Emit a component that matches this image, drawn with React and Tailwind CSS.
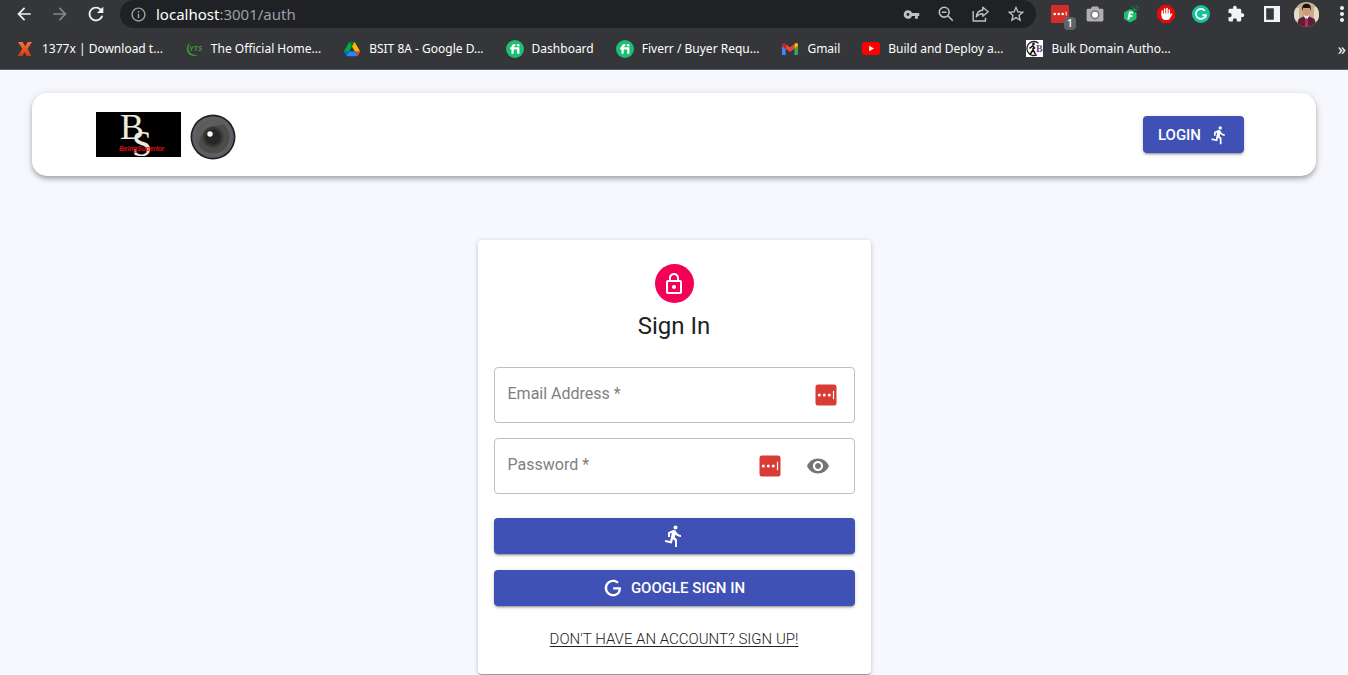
import React from 'react';
import {
  MdArrowBack, MdArrowForward, MdRefresh, MdInfoOutline, MdVpnKey, MdStarOutline,
  MdExtension, MdMoreVert, MdDirectionsRun, MdLockOutline, MdVisibility,
} from 'react-icons/md';

const chromeFont = "font-['Noto_Sans','Open_Sans',sans-serif]";

function XMark() {
  return (
    <svg viewBox="0 0 16 16" className="size-4">
      <defs>
        <linearGradient id="xg" x1="0" y1="0" x2="0" y2="1">
          <stop offset="0" stopColor="#f4743b" />
          <stop offset="1" stopColor="#d93a0c" />
        </linearGradient>
      </defs>
      <path d="M1 1h4.6l2.6 4.2L10.800 1H15l-4.300 6.800L14.200 15H9.600L7.700 10.900 5.200 15H.8l4.500-7.200z" fill="url(#xg)" />
    </svg>
  );
}

function YtsMark() {
  return (
    <svg viewBox="0 0 16 16" className="size-4">
      <path d="M5 1.500C1 3 0 7.500 1.500 11c1.800 4 7.500 5 11 2.800C8.500 14.500 4.500 13.500 3 10 1.800 7 2.500 3.600 5 1.500z" fill="#3f9a35" />
      <text x="3" y="10" fontSize="7" fontStyle="italic" fontWeight="700" fontFamily="Liberation Sans, sans-serif" fill="#3f9a35">YTS</text>
    </svg>
  );
}

function DriveMark() {
  return (
    <svg viewBox="0 0 87.300 78" className="size-4">
      <path d="M6.600 66.850l3.850 6.650c.8 1.400 1.950 2.500 3.300 3.300L27.500 53H0c0 1.550.4 3.100 1.200 4.500z" fill="#0066da" />
      <path d="M43.650 25L29.900 1.200c-1.350.8-2.500 1.900-3.300 3.300L1.200 48.500C.4 49.900 0 51.450 0 53h27.500z" fill="#00ac47" />
      <path d="M73.550 76.800c1.350-.8 2.500-1.900 3.300-3.300l1.600-2.750 7.650-13.250c.8-1.400 1.200-2.950 1.200-4.500H59.800l5.850 11.500z" fill="#ea4335" />
      <path d="M43.650 25L57.400 1.200C56.050.4 54.500 0 52.900 0H34.400c-1.600 0-3.150.45-4.500 1.200z" fill="#00832d" />
      <path d="M59.800 53H27.500L13.750 76.800c1.350.8 2.900 1.200 4.500 1.200h50.800c1.600 0 3.150-.45 4.500-1.200z" fill="#2684fc" />
      <path d="M73.400 26.500L60.700 4.500c-.8-1.400-1.950-2.500-3.300-3.300L43.650 25 59.800 53h27.450c0-1.550-.4-3.100-1.200-4.500z" fill="#ffba00" />
    </svg>
  );
}

function FiverrMark() {
  return (
    <svg viewBox="0 0 18 18" className="size-[18px]">
      <circle cx="9" cy="9" r="9" fill="#1dbf73" />
      <path d="M4.200 8.300h8.100v5.400M6.600 13.700V7q0-2 2.800-1.900" fill="none" stroke="#fff" strokeWidth="2.200" />
      <circle cx="12.200" cy="5.200" r="1.300" fill="#fff" />
    </svg>
  );
}

function GmailMark() {
  return (
    <svg viewBox="52 42 88 66" className="w-4">
      <path fill="#4285f4" d="M58 108h14V74L52 59v43c0 3.320 2.690 6 6 6" />
      <path fill="#34a853" d="M120 108h14c3.320 0 6-2.690 6-6V59l-20 15" />
      <path fill="#fbbc04" d="M120 48v26l20-15v-8c0-7.420-8.470-11.650-14.400-7.200" />
      <path fill="#ea4335" d="M72 74V48l24 18 24-18v26L96 92" />
      <path fill="#c5221f" d="M52 51v8l20 15V48l-5.600-4.200c-5.940-4.450-14.400-.22-14.400 7.200" />
    </svg>
  );
}

function YoutubeMark() {
  return (
    <svg viewBox="0 0 18 13" className="w-[18px]">
      <rect width="18" height="13" rx="3.200" fill="#f00" />
      <path d="M7.200 3.700v5.600l4.800-2.800z" fill="#fff" />
    </svg>
  );
}

function BulkMark() {
  return (
    <svg viewBox="0 0 17 17" className="size-[17px]">
      <rect width="17" height="17" fill="#fff" />
      <path d="M11 14.800A7 7 0 1 1 12.500 3.200" fill="none" stroke="#222" strokeWidth="1.300" />
      <circle cx="7.500" cy="4" r="1.300" fill="#111" />
      <path d="M7.500 5.500L7 10l-3 4.500M7 9.500l2.500 5M3.500 8.500l3-2.500 2.500 2.500" fill="none" stroke="#111" strokeWidth="1.600" />
      <text x="10" y="12" fontSize="10" fontWeight="700" fontFamily="Liberation Serif, serif" fill="#6b3d8f">B</text>
    </svg>
  );
}

const bookmarks = [
  ['1377x | Download t...', <XMark />],
  ['The Official Home...', <YtsMark />],
  ['BSIT 8A - Google D...', <DriveMark />],
  ['Dashboard', <FiverrMark />],
  ['Fiverr / Buyer Requ...', <FiverrMark />],
  ['Gmail', <GmailMark />],
  ['Build and Deploy a...', <YoutubeMark />],
  ['Bulk Domain Autho...', <BulkMark />],
];

function ZoomOutIcon() {
  return (
    <svg viewBox="0 0 16 16" className="size-4" fill="none" stroke="#bdc1c6" strokeWidth="1.600">
      <circle cx="6.200" cy="6.200" r="4.900" />
      <path d="M9.800 9.800l5 5M3.900 6.200h4.600" />
    </svg>
  );
}

function ShareIcon() {
  return (
    <svg viewBox="0 0 18 16" className="w-[18px]" fill="none" stroke="#bdc1c6" strokeWidth="1.400" strokeLinejoin="round">
      <path d="M1.200 5v10h12.300v-3.200" />
      <path d="M10.800 1.200l5.400 4.600-5.400 4.500V7.700c-3 0-5 .9-6.500 3.300.3-3.900 2.700-6.500 6.500-7z" />
    </svg>
  );
}

function IconButton({ label, children }) {
  return (
    <button type="button" aria-label={label} className="relative flex size-7 items-center justify-center">
      {children}
    </button>
  );
}

const extensions = [
  ['Password manager', (
    <>
      <svg viewBox="0 0 18 18" className="size-[18px]">
        <rect width="18" height="18" rx="1.500" fill="#d32d27" />
        <circle cx="3.700" cy="9" r="1.300" fill="#fff" />
        <circle cx="7.700" cy="9" r="1.300" fill="#fff" />
        <circle cx="11.700" cy="9" r="1.300" fill="#fff" />
        <path d="M15.200 6.800v3.700" stroke="#fff" />
      </svg>
      <span className="absolute -right-0.5 -bottom-0.5 flex h-[13px] w-3 items-center justify-center rounded-sm bg-[#5f6368] text-[11px] font-medium text-white">1</span>
    </>
  )],
  ['Screenshot', (
    <svg viewBox="0 0 18 16" className="w-[18px]">
      <path d="M6 .5h6l1.200 2.300H16a1.400 1.400 0 0 1 1.400 1.400v9.900a1.400 1.400 0 0 1-1.400 1.400H2A1.400 1.400 0 0 1 .6 14.100V4.200A1.400 1.400 0 0 1 2 2.800h2.800z" fill="#b0b0b0" />
      <circle cx="9" cy="8.800" r="4.600" fill="#77787a" />
      <circle cx="9" cy="8.800" r="3" fill="#fff" />
    </svg>
  )],
  ['Fiverr tools', (
    <svg viewBox="0 0 16 18" className="w-4">
      <path d="M1 7.500l6-3.500 6.500 3.500v6.500L7 17.500 1 14z" fill="#1dbf73" />
      <path d="M10 6l-2-2h2V2.500h2V4h2v2h-2v2h-2zM12.500.5H14V2h-1.500zM14.500 2H16v1.500h-1.500zM8.500 1H10v1.500H8.500z" fill="#14804d" />
      <path d="M10.300 7.500H6.800l-1.500 7M5.800 11h3.500" stroke="#fff" strokeWidth="1.800" fill="none" />
    </svg>
  )],
  ['Ad blocker', (
    <svg viewBox="0 0 18 18" className="size-[18px]">
      <path d="M5.300 0h7.400L18 5.300v7.400L12.700 18H5.300L0 12.700V5.300z" fill="#e20a0a" />
      <path d="M5.200 6v4M7.600 4v6M10 3.600V10M12.300 5v5" stroke="#fff" strokeWidth="1.600" strokeLinecap="round" />
      <path d="M4.400 8.500h8.700v1.300l1.300-1.400c.9-.2 1 .5.700 1L12.500 14c-1 1.300-5.500 1.300-6.700 0-1.200-1.400-1.400-3-1.400-5.500z" fill="#fff" />
    </svg>
  )],
  ['Grammar', (
    <svg viewBox="0 0 18 18" className="size-[18px]">
      <circle cx="9" cy="9" r="9" fill="#15c39a" />
      <path d="M12.800 5.700A5 5 0 1 0 13.800 10H10.300" fill="none" stroke="#fff" strokeWidth="1.700" />
      <path d="M13.800 10l-.4 3.200" stroke="#fff" strokeWidth="1.500" />
    </svg>
  )],
  ['Extensions', <MdExtension className="size-[18px] text-[#f1f3f4]" />],
  ['Side panel', (
    <svg viewBox="0 0 16 16" className="size-4">
      <path fillRule="evenodd" d="M0 0h16v16H0zM2.200 2.200v11.600h7.600V2.200z" fill="#f1f3f4" />
    </svg>
  )],
  ['Profile', (
    <svg viewBox="0 0 25 25" className="size-[25px]">
      <clipPath id="pf"><circle cx="12.500" cy="12.500" r="12.500" /></clipPath>
      <g clipPath="url(#pf)">
        <rect width="25" height="25" fill="#c9ae8c" />
        <path d="M0 6h5v13H0zM20 5h5v14h-5z" fill="#e6dac6" />
        <path d="M3 25l1.500-8 5-2.500h6l5 2.500 2 8z" fill="#5c1f38" />
        <path d="M10 14.500l2.500 4 2.500-4v-2h-5z" fill="#eadfe3" />
        <path d="M11.500 16.500h2l.8 8.500h-3.600z" fill="#b82d52" />
        <ellipse cx="12.500" cy="8.800" rx="3.900" ry="5.200" fill="#d19a78" />
        <path d="M8.300 9C7.500 4 9 1.800 12.500 1.800S17.500 4 16.700 9l-.9-3.200c-2 .4-4.600.4-6.600 0z" fill="#181212" />
      </g>
    </svg>
  )],
  ['Menu', <MdMoreVert className="size-6 shrink-0 text-[#f1f3f4]" />],
];

function BrowserChrome() {
  return (
    <header className={`border-b border-[#5c5d60] bg-[#35363a] ${chromeFont}`}>
      <div className="flex h-7 items-center">
        <nav className="flex items-center gap-2 px-2.5 text-[#f1f3f4]">
          <IconButton label="Back"><MdArrowBack className="size-5" /></IconButton>
          <IconButton label="Forward"><MdArrowForward className="size-5 text-[#85868a]" /></IconButton>
          <IconButton label="Reload"><MdRefresh className="size-[22px]" /></IconButton>
        </nav>
        <div className="flex h-full flex-1 items-center rounded-full bg-[#202124] pr-1.5 pl-2.5">
          <MdInfoOutline className="size-[17px] text-[#9aa0a6]" />
          <span className="flex-1 pl-[9px] text-[15px] leading-5 text-[#9aa0a6]">
            <span className="text-white">localhost</span>:3001/auth
          </span>
          <div className="flex gap-[7px] text-[#bdc1c6]">
            <IconButton label="Saved passwords"><MdVpnKey className="size-[17px]" /></IconButton>
            <IconButton label="Zoom"><ZoomOutIcon /></IconButton>
            <IconButton label="Share"><ShareIcon /></IconButton>
            <IconButton label="Bookmark"><MdStarOutline className="size-5" /></IconButton>
          </div>
        </div>
        <div className="-mr-2 ml-2.5 flex w-[310px] shrink-0 justify-between">
          {extensions.map(([label, icon]) => (
            <IconButton key={label} label={label}>{icon}</IconButton>
          ))}
        </div>
      </div>
      <div className="flex h-[41px] items-center gap-[22px] pr-0.5 pl-4 text-xs text-white">
        {bookmarks.map(([title, icon]) => (
          <a key={title} href="#" className="flex items-center gap-2 whitespace-nowrap">
            <span className="flex w-[18px] justify-center">{icon}</span>
            {title}
          </a>
        ))}
        <button type="button" aria-label="More bookmarks" className="ml-auto text-base">»</button>
      </div>
    </header>
  );
}

function BrandLogo() {
  return (
    <svg viewBox="0 0 85 45" className="w-[85px]" role="img" aria-label="Being Superior">
      <rect width="85" height="45" />
      <g fontFamily="Liberation Serif, serif" fill="#efe9df">
        <text x="24" y="27" fontSize="36">B</text>
        <text x="36" y="44" fontSize="36">S</text>
      </g>
      <text x="23" y="39" fontSize="6.600" fontWeight="700" fontStyle="italic" fontFamily="Liberation Sans, sans-serif" fill="#e01010">BeingSuperior</text>
    </svg>
  );
}

function LensLogo() {
  return (
    <svg viewBox="0 0 46 46" className="mt-1 w-[46px]">
      <circle cx="23" cy="23" r="22.500" fill="#1f2122" />
      <circle cx="23" cy="23" r="20.800" fill="#5c5f64" />
      <circle cx="23" cy="23" r="16.500" fill="#4b4b49" />
      <path d="M8.500 31C10 18 19 11 34 10.800A16.500 16.500 0 0 0 8.500 31z" fill="#5d5d5b" />
      <circle cx="23" cy="23" r="10.500" fill="#393a38" />
      <circle cx="23" cy="23" r="7.800" fill="#252726" />
      <circle cx="20" cy="20" r="2.700" fill="#fff" />
    </svg>
  );
}

function PasswordBadge() {
  return (
    <svg viewBox="0 0 22 22" className="size-[22px]">
      <rect x=".5" y=".5" width="21" height="21" rx="2.500" fill="#d93b36" />
      <circle cx="4.300" cy="11" r="1.500" fill="#fff" />
      <circle cx="9.300" cy="11" r="1.500" fill="#fff" />
      <circle cx="14.300" cy="11" r="1.500" fill="#fff" />
      <path d="M18.500 6.800v8.400" stroke="#fff" strokeWidth="1.200" />
    </svg>
  );
}

function Field({ id, type, label, children }) {
  return (
    <div className="relative flex h-14 items-center rounded border border-[#c0c0c0] pr-[17px]">
      <label htmlFor={id} className="pointer-events-none absolute left-[13px] pb-0.5 text-base text-[#808080]">
        {label} *
      </label>
      <input id={id} type={type} required className="h-full min-w-0 flex-1 bg-transparent px-3 text-base outline-none" />
      {children}
    </div>
  );
}

const buttonStyle =
  'flex items-center justify-center rounded bg-[#3f51b5] text-[15px] leading-6 font-medium text-white uppercase shadow-[0_3px_1px_-2px_rgba(0,0,0,0.2),0_2px_2px_0_rgba(0,0,0,0.14),0_1px_5px_0_rgba(0,0,0,0.12)]';

function GoogleIcon() {
  return (
    <svg viewBox="0 0 24 24" className="size-5" fill="currentColor">
      <path d="M21.35,11.1H12.18V13.83H18.69C18.36,17.64 15.19,19.27 12.19,19.27C8.36,19.27 5,16.25 5,12C5,7.9 8.2,4.73 12.2,4.73C15.29,4.73 17.1,6.7 17.1,6.7L19,4.72C19,4.72 16.56,2 12.1,2C6.42,2 2.03,6.8 2.03,12C2.03,17.05 6.16,22 12.25,22C17.6,22 21.5,18.33 21.5,12.91C21.5,11.76 21.35,11.1 21.35,11.1Z" />
    </svg>
  );
}

function SignInCard() {
  return (
    <form className="mx-auto mt-16 flex w-full max-w-[393px] flex-col rounded bg-white px-4 pt-6 pb-[25px] shadow-[0_2px_1px_-1px_rgba(0,0,0,0.2),0_1px_1px_0_rgba(0,0,0,0.14),0_1px_5px_0_rgba(0,0,0,0.2)]">
      <div className="flex flex-col items-center gap-[7px]">
        <span className="flex size-[39px] items-center justify-center rounded-full bg-[#f50057] text-white">
          <MdLockOutline className="size-6" />
        </span>
        <h1 className="text-2xl leading-8 font-normal text-[#212121]">Sign In</h1>
      </div>
      <div className="mt-[25px] flex flex-col gap-[15px]">
        <Field id="email" type="email" label="Email Address">
          <PasswordBadge />
        </Field>
        <Field id="password" type="password" label="Password">
          <PasswordBadge />
          <button type="button" aria-label="Show password" className="mr-[7px] ml-[25px] text-[#757575]">
            <MdVisibility className="size-6" />
          </button>
        </Field>
      </div>
      <button type="submit" aria-label="Sign in" className={`mt-6 h-9 ${buttonStyle}`}>
        <MdDirectionsRun className="size-6" />
      </button>
      <button type="button" className={`mt-4 h-9 gap-2 ${buttonStyle}`}>
        <GoogleIcon />
        Google Sign In
      </button>
      <a href="#" className="mt-[23px] text-center text-[15px] leading-5 font-light text-[#212121] uppercase underline underline-offset-2">
        Don't have an account? Sign Up!
      </a>
    </form>
  );
}

export default function App() {
  return (
    <div className="flex h-screen flex-col overflow-hidden bg-[#f6f8fd]">
      <BrowserChrome />
      <main className="min-h-0 flex-1 overflow-hidden px-8 pt-[23px] font-['Roboto',sans-serif]">
        <div className="flex h-[83px] items-center justify-between rounded-[15px] bg-white pr-[72px] pl-16 shadow-[0_2px_4px_-1px_rgba(0,0,0,0.2),0_4px_5px_0_rgba(0,0,0,0.14),0_1px_10px_0_rgba(0,0,0,0.12)]">
          <a href="#" className="flex items-center gap-[9px]">
            <BrandLogo />
            <LensLogo />
          </a>
          <button type="button" className={`h-[37px] gap-2 px-[15px] ${buttonStyle}`}>
            Login
            <MdDirectionsRun className="size-5" />
          </button>
        </div>
        <SignInCard />
      </main>
    </div>
  );
}
